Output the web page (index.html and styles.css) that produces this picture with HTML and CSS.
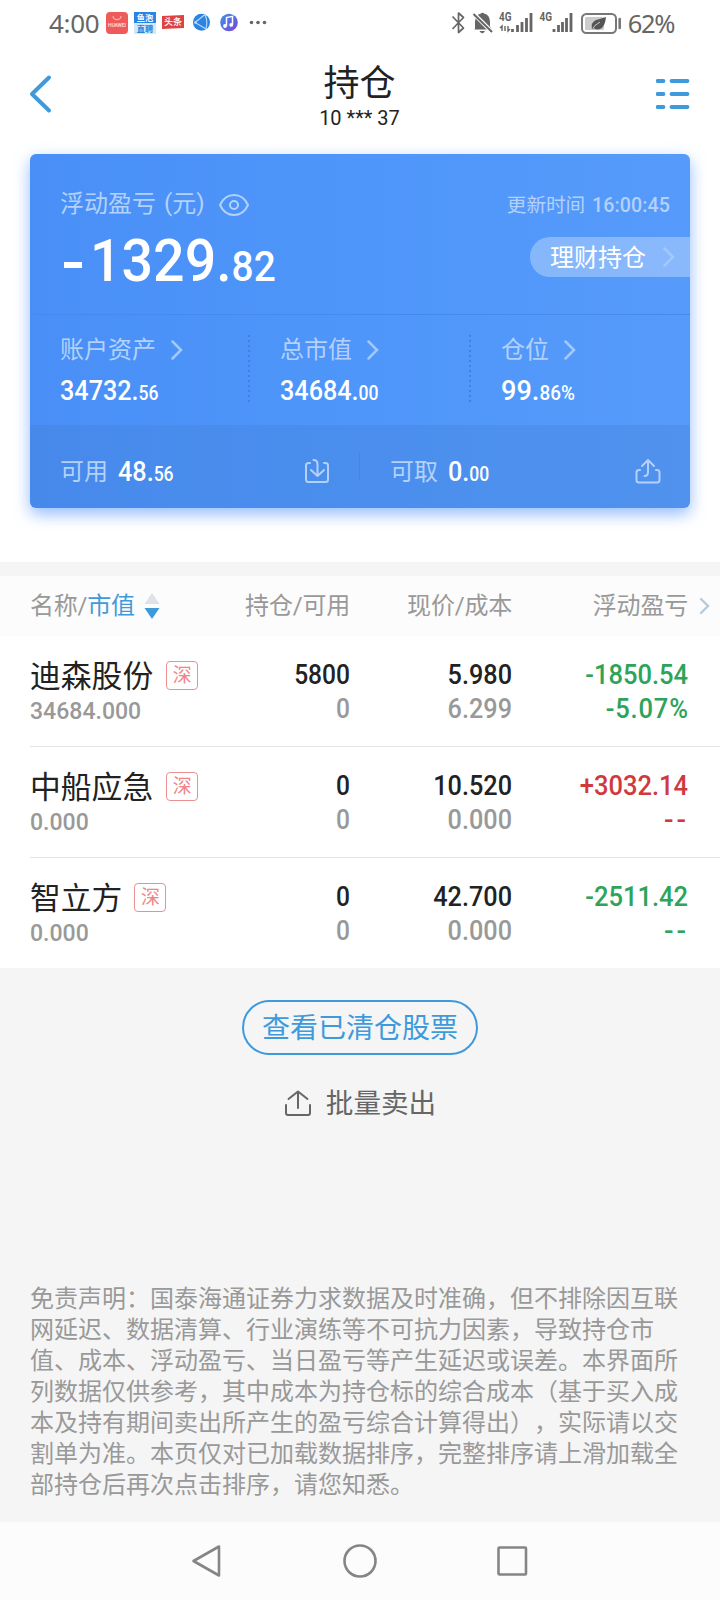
FILE: index.html
```html
<!DOCTYPE html>
<html lang="zh-CN">
<head>
<meta charset="utf-8">
<title>持仓</title>
<link rel="stylesheet" href="styles.css">
</head>
<body>
<div class="status">
  <span class="clock">4:00</span>
  <svg class="apps" width="164" height="28" viewBox="105 9 164 28">
    <rect x="107" y="12" width="22" height="22" rx="4" fill="#ef5b5b"/>
    <path d="M114 16a4 3.6 0 0 0 8 0" fill="none" stroke="#ffb0a8" stroke-width="1.2"/>
    <text x="118" y="26.5" font-size="5" font-weight="700" fill="#ffd5d0" text-anchor="middle" textLength="18">HUAWEI</text>
    <rect x="135" y="12" width="22" height="11" fill="#2a84e6"/>
    <rect x="135" y="23" width="22" height="11" fill="#cfe8fb"/>
    <text x="146" y="20.800" font-size="8.200" font-weight="700" fill="#fff" text-anchor="middle">鱼泡</text>
    <text x="146" y="31.800" font-size="8.200" font-weight="700" fill="#2a84d6" text-anchor="middle">直聘</text>
    <path d="M163 16l22-1v13l-22 1z" fill="#dc4444"/>
    <text x="174" y="25.4" font-size="9" font-weight="500" fill="#fff" text-anchor="middle">头条</text>
    <circle cx="202.500" cy="22.300" r="8.500" fill="#2c84e2"/>
    <path d="M206 14.500L196 22.500L207 29M206 14.500q3 7 1 14.500" fill="none" stroke="#b9dcff" stroke-width="1.100"/>
    <circle cx="196.500" cy="22.500" r="1.300" fill="#b9dcff"/>
    <defs><linearGradient id="music" x2="1" y2="1"><stop stop-color="#3c93e6"/><stop offset="1" stop-color="#7c45d8"/></linearGradient></defs>
    <circle cx="230" cy="22.500" r="8.800" fill="url(#music)"/>
    <path d="M227.500 26v-8.500l6-1.200v8.500" fill="none" stroke="#fff" stroke-width="1.500"/>
    <circle cx="226" cy="26" r="1.900" fill="#fff"/><circle cx="232.200" cy="24.900" r="1.900" fill="#fff"/>
    <g fill="#666"><circle cx="252.500" cy="22.500" r="1.800"/><circle cx="259" cy="22.500" r="1.800"/><circle cx="265.500" cy="22.500" r="1.800"/></g>
  </svg>
  <svg class="signals" width="174" height="28" viewBox="450 9 174 28">
    <path d="M453.500 16.500L464.500 28L459.500 32.500V13L464.500 17.500L453.500 29" fill="none" stroke="#666" stroke-width="1.700" stroke-linejoin="round"/>
    <path d="M476 29V21.500q.5-6.800 5.500-7.700q2-2 4 0q5 .9 5.500 7.700v5l2 3H475z M480.500 31h5.500q-2.700 4.500-5.500 0z" fill="#666"/>
    <path d="M475.500 14.500L493.500 32.500" stroke="#fff" stroke-width="4"/><path d="M474.500 14L493 32" stroke="#666" stroke-width="2"/>
    <text class="net" x="500" y="21" textLength="12.500" lengthAdjust="spacingAndGlyphs">4G</text>
    <path d="M503 31v-5l-2 2M506 26v5M509 26v5l2-2" fill="none" stroke="#666" stroke-width="1.400"/>
    <path d="M513.500 32v-3M518.500 32v-7M523 32v-10M527.500 32v-14M532 32v-19M555 32v-3M559.500 32v-7M563.500 32v-10M567.500 32v-14M572 32v-19" stroke="#666" stroke-width="2.800"/>
    <text class="net" x="540.500" y="21" textLength="12.500" lengthAdjust="spacingAndGlyphs">4G</text>
    <rect x="583" y="14" width="34" height="19" rx="4.500" fill="#fff" stroke="#777" stroke-width="2"/>
    <rect x="586" y="17" width="19" height="13" rx="1.500" fill="#ccc"/>
    <path d="M593 30q-1.500-8 4-10q4-1 10-3q-1 10-6 12q-3 1-6-.5z" fill="#555"/><path d="M593 30q2-5 8-8" stroke="#ccc" fill="none"/>
    <path d="M620.700 19v9" stroke="#777" stroke-width="2.600" stroke-linecap="round"/>
  </svg>
  <span class="battery">62%</span>
</div>

<header class="nav">
  <svg width="24" height="40" viewBox="0 0 24 40"><path d="M20 3.500L3 20L20 36.500" fill="none" stroke="#3f9adb" stroke-width="4" stroke-linecap="round" stroke-linejoin="round"/></svg>
  <div class="heading"><h1>持仓</h1><p>10 *** 37</p></div>
  <svg width="34" height="30" viewBox="0 0 34 30"><path d="M1.500 2h6M15.500 2h16M1.500 15h6M15.500 15h16M1.500 28h6M15.500 28h16" stroke="#3f9adb" stroke-width="3.800" stroke-linecap="round"/></svg>
</header>

<section class="card">
  <div class="summary">
    <div class="summary-head">
      <span class="label">浮动盈亏<i>(</i>元<i>)</i></span>
      <svg class="eye" width="32" height="24" viewBox="0 0 32 24" fill="none" stroke="#b3d1fb" stroke-width="2"><path d="M2 12C5 5.500 10 2 16 2s11 3.500 14 10c-3 6.500-8 10-14 10S5 18.500 2 12z"/><circle cx="16" cy="12" r="4"/></svg>
      <span class="updated">更新时间 <b>16:00:45</b></span>
    </div>
    <div class="summary-value">
      <span class="total"><span class="minus"></span><span class="num">1329.<small>82</small></span></span>
      <a class="pill"><span>理财持仓</span><svg width="12" height="20" viewBox="0 0 12 20"><path d="M1.500 1.500L10 10L1.500 18.500"/></svg></a>
    </div>
  </div>
  <div class="stats">
    <div class="stat"><div class="label">账户资产<svg width="12" height="20" viewBox="0 0 12 20"><path d="M1.500 1.500L10 10L1.500 18.500"/></svg></div><span class="num">34732.<small>56</small></span></div>
    <div class="stat"><div class="label">总市值<svg width="12" height="20" viewBox="0 0 12 20"><path d="M1.500 1.500L10 10L1.500 18.500"/></svg></div><span class="num">34684.<small>00</small></span></div>
    <div class="stat"><div class="label">仓位<svg width="12" height="20" viewBox="0 0 12 20"><path d="M1.500 1.500L10 10L1.500 18.500"/></svg></div><span class="num percent">99.<small>86%</small></span></div>
  </div>
  <div class="cash">
    <div class="cash-cell"><span class="label">可用</span><span class="num">48.<small>56</small></span>
      <svg width="26" height="26" viewBox="0 0 26 26" fill="none" stroke="#b3d1fb" stroke-width="2" stroke-linecap="round" stroke-linejoin="round"><path d="M6 5H4.500Q2 5 2 7.500v14Q2 24 4.500 24h17q2.500 0 2.500-2.500v-14Q24 5 21.500 5H20M9.500 2q4 0 4 4v12M7 12l6.500 6l6.500-6"/></svg></div>
    <div class="cash-cell"><span class="label">可取</span><span class="num">0.<small>00</small></span>
      <svg width="26" height="26" viewBox="0 0 26 26" fill="none" stroke="#b3d1fb" stroke-width="2" stroke-linecap="round" stroke-linejoin="round"><path d="M5 12H4q-2.500 0-2.500 2.500V22Q1.500 24.500 4 24.500h18q2.500 0 2.500-2.500v-7.500Q24.500 12 22 12h-1M13 2v12q0 4-3.500 4M7 8l6-6l6 6"/></svg></div>
  </div>
</section>

<section class="table">
  <div class="grid table-head">
    <span class="name-head">名称/<em>市值</em><svg width="16" height="28" viewBox="0 0 16 28"><path d="M8 1L15.500 12H.5z" fill="#dfe3e7"/><path d="M.5 16h15L8 27z" fill="#3f9adb"/></svg></span>
    <span>持仓/可用</span><span>现价/成本</span><span>浮动盈亏</span>
    <svg class="more" width="12" height="18" viewBox="0 0 12 18"><path d="M2 2L9 9L2 16"/></svg>
  </div>
  <div class="grid row">
    <div class="stock"><div class="name">迪森股份<span class="tag">深</span></div><span class="amount">34684.000</span></div>
    <div class="cell"><span>5800</span><span class="sub">0</span></div>
    <div class="cell price"><span>5.980</span><span class="sub">6.299</span></div>
    <div class="cell pl down"><span>-1850.54</span><span class="rate">-5.07%</span></div>
  </div>
  <div class="grid row">
    <div class="stock"><div class="name">中船应急<span class="tag">深</span></div><span class="amount">0.000</span></div>
    <div class="cell"><span>0</span><span class="sub">0</span></div>
    <div class="cell price"><span>10.520</span><span class="sub">0.000</span></div>
    <div class="cell pl up"><span>+3032.14</span><span class="dash">--</span></div>
  </div>
  <div class="grid row">
    <div class="stock"><div class="name three">智立方<span class="tag">深</span></div><span class="amount">0.000</span></div>
    <div class="cell"><span>0</span><span class="sub">0</span></div>
    <div class="cell price"><span>42.700</span><span class="sub">0.000</span></div>
    <div class="cell pl down"><span>-2511.42</span><span class="dash">--</span></div>
  </div>
</section>

<main class="footer">
  <a class="cleared">查看已清仓股票</a>
  <a class="batch"><svg width="28" height="28" viewBox="0 0 28 28" fill="none" stroke="#666" stroke-width="2" stroke-linecap="round" stroke-linejoin="round"><path d="M2 15v8q0 2 2 2h20q2 0 2-2v-8M14 18V1.500M4.500 9L14 1.500l9.500 7.500"/></svg>批量卖出</a>
  <p class="disclaimer">免责声明：国泰海通证券力求数据及时准确，但不排除因互联<br>网延迟、数据清算、行业演练等不可抗力因素，导致持仓市<br>值、成本、浮动盈亏、当日盈亏等产生延迟或误差。本界面所<br>列数据仅供参考，其中成本为持仓标的综合成本（基于买入成<br>本及持有期间卖出所产生的盈亏综合计算得出），实际请以交<br>割单为准。本页仅对已加载数据排序，完整排序请上滑加载全<br>部持仓后再次点击排序，请您知悉。</p>
</main>

<nav class="system">
  <svg width="32" height="36" viewBox="0 0 32 36"><path d="M28 3.500V32.500L2.500 18z"/></svg>
  <svg width="36" height="36" viewBox="0 0 36 36"><circle cx="18" cy="18" r="15.500"/></svg>
  <svg width="32" height="32" viewBox="0 0 32 32"><rect x="1.500" y="2.500" width="27.500" height="27" rx="1"/></svg>
</nav>
</body>
</html>
```
FILE: styles.css
```css
* { box-sizing: border-box; }
body { margin: 0; width: 720px; height: 1600px; overflow: hidden; background: #fff; color: #222; font-family: Roboto, "Noto Sans CJK SC", sans-serif; }
svg { display: block; flex: none; }
h1, p { margin: 0; font-weight: 400; }
i, em { font-style: normal; }

.status { display: flex; align-items: center; height: 46px; padding: 0 46px 0 49px; color: #666; font-family: "Noto Sans", sans-serif; font-size: 26px; }
.status text { font-family: Roboto, "Noto Sans CJK SC", sans-serif; }
.status .net { font-size: 13px; font-weight: 700; fill: #666; }
.clock { width: 57px; letter-spacing: -0.3px; }
.signals { margin-left: 181px; }
.battery { margin-left: 5px; letter-spacing: -1.4px; font-size: 25.500px; }

.nav { display: flex; justify-content: space-between; padding: 0 30px 0 29px; height: 108px; }
.nav > svg { margin-top: 28px; }
.nav > svg:last-child { margin-top: 33px; }
.heading { text-align: center; padding-left: 10px; }
.heading h1 { font-size: 36px; line-height: 54px; margin-top: 11px; }
.heading p { font-size: 20px; line-height: 20px; margin-top: -3px; }

.card { display: flex; flex-direction: column; width: 660px; height: 354px; margin: 0 30px; border-radius: 6px; overflow: hidden; color: #fff; background: linear-gradient(90deg, #498ff7, #4f96fa 50%, #569bfa); box-shadow: 0 6px 16px rgba(74,143,255,.6); }
.label { color: #b3d1fb; font-size: 24px; line-height: 36px; }
.label i { position: relative; top: -1px; margin: 0 0 0 8px; }
.label i:last-child { margin: 0; }
.num { display: inline-block; white-space: nowrap; font-weight: 500; font-size: 28px; line-height: 34px; transform: scaleX(.9); transform-origin: left; }
.num small { font-size: 19.500px; }
.summary { height: 161px; border-bottom: 1px solid #4889ec; padding-top: 32px; }
.summary-head { display: flex; align-items: center; height: 36px; padding: 0 20px 0 30px; }
.eye { margin: 2px 0 0 13px; }
.updated { margin-left: auto; margin-top: -2px; color: #b3d1fb; font-size: 19.600px; }
.updated b { font-weight: 500; margin-left: 2px; letter-spacing: .1px; }
.summary-value { display: flex; justify-content: space-between; padding-left: 34px; }
.total { display: flex; }
.minus { width: 18px; height: 6px; background: #fff; margin: 40px 8px 0 0; }
.total .num { font-size: 60px; line-height: 70px; margin-top: 4px; transform: scaleX(.925); }
.total small { font-size: 42px; }
.pill { display: flex; align-items: center; width: 160px; height: 40px; margin-top: 15px; padding-left: 20px; border-radius: 20px 0 0 20px; background: rgba(255,255,255,.3); font-size: 24px; }
.pill span { margin-top: -3px; }
.pill svg { margin-left: 17px; }
.pill path, .label path { fill: none; stroke: #a2c8fc; stroke-width: 2.500; stroke-linecap: round; }
.stats { display: grid; grid-template-columns: 220px 221px 1fr; height: 110px; }
.stat { height: 68px; margin-top: 20px; padding-left: 30px; background: linear-gradient(#4280e0 40%, transparent 40%) right top / 2px 5px repeat-y; }
.stat:last-child { background: none; }
.stat .label { display: flex; align-items: center; gap: 15px; margin-top: -3px; }
.stat .num { margin-top: 6px; }
.stat .percent { transform: scaleX(.97); }
.cash { display: flex; flex: 1; background: rgba(65,125,210,.3); }
.cash-cell { display: flex; align-items: center; width: 330px; padding: 11px 29px 0 30px; }
.cash-cell:first-child { padding-right: 30px; background: linear-gradient(#4583e0, #4583e0) right 0 center / 1px 28px no-repeat; }
.cash-cell .num { margin: 3px 0 0 10px; }
.cash-cell svg { margin-left: auto; margin-bottom: 2px; }

.table { margin-top: 54px; border-top: 14px solid #f5f5f5; }
.grid { display: grid; grid-template-columns: 180px 140px 162px 176px 1fr; text-align: right; }
.table-head { height: 60px; padding-left: 30px; align-items: center; background: #fcfcfc; color: #999; font-size: 24px; line-height: 60px; letter-spacing: -.2px; }
.name-head { display: flex; align-items: center; }
.name-head em { color: #3f9adb; }
.name-head svg { margin-left: 9px; }
.more { margin-left: 11px; }
.more path { fill: none; stroke: #b7cbdc; stroke-width: 2.400; stroke-linecap: round; }
.row { height: 111px; margin-left: 30px; border-bottom: 1px solid #e5e5e5; }
.row:last-child { border: 0; height: 110px; }
.stock { text-align: left; padding-top: 19px; white-space: nowrap; }
.name { display: flex; align-items: center; font-size: 30.800px; line-height: 43px; height: 43px; }
.tag { width: 32px; height: 29px; margin: -3px 0 0 13px; border: 1px solid #eb9092; border-radius: 4px; color: #ef8588; font-size: 19px; line-height: 27px; text-align: center; }
.three .tag { margin-left: 12px; }
.amount { display: inline-block; color: #999; font-size: 24px; line-height: 26px; font-weight: 500; transform: scaleX(.96); transform-origin: left; }
.cell { display: flex; flex-direction: column; align-items: flex-end; padding-top: 22px; font-size: 27px; line-height: 34px; font-weight: 500; transform: scaleX(.91); transform-origin: right; }
.price { transform: scaleX(.935); }
.pl { transform: scaleX(.945); }
.sub { color: #999; }
.down { color: #2ea35a; }
.up { color: #d03a3e; }
.rate { letter-spacing: .9px; margin-right: -.9px; }
.dash { letter-spacing: 3px; margin-right: -1px; transform: scaleX(1.1); transform-origin: right; }

.footer { display: flex; flex-direction: column; align-items: center; height: 554px; padding-top: 32px; background: #f5f5f5; }
.cleared { width: 236px; height: 55px; border: 2px solid #3f9adb; border-radius: 28px; color: #3f9adb; font-size: 28px; line-height: 54px; text-align: center; }
.batch { display: flex; align-items: center; gap: 14px; margin-top: 29px; color: #666; font-size: 27.600px; line-height: 40px; }
.disclaimer { width: 660px; margin-top: 157px; color: #999; font-family: "Noto Sans CJK SC", sans-serif; font-size: 24px; line-height: 31px; white-space: nowrap; text-spacing-trim: space-all; }

.system { display: flex; align-items: center; justify-content: center; gap: 119px; height: 78px; background: #fcfcfc; }
.system path, .system rect, .system circle { fill: none; stroke: #858585; stroke-width: 2.600; stroke-linejoin: round; }
```
